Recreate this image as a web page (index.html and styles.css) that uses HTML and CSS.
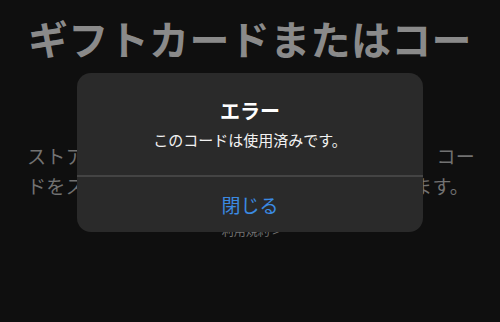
FILE: index.html
```html
<!doctype html>
<html>
  <head>
    <meta charset="utf-8">
    <meta name="viewport" content="width=device-width, initial-scale=1" />
    <title>ギフトカードまたはコード</title>
    <link rel="stylesheet" href="styles.css">
  </head>
  <body>
    <div class='all'>
      <main class='content'>
        <h1 class='title'>ギフトカードまたはコード</h1>
        <p class='lead'>
          ストアで使えるギフトカードまたはチャージ コー<br>ドをスキャンするか、手動で入力して追加します。
        </p>
        <a class='terms' href='#'>利用規約 &gt;</a>
      </main>

      <div class='alert' role='alertdialog'>
        <div class='alert-body'>
          <div class='alert-title'>エラー</div>
          <div class='alert-message'>このコードは使用済みです。</div>
        </div>
        <div class='alert-sep'></div>
        <button class='alert-button'>閉じる</button>
      </div>
    </div>
  </body>
</html>
```

FILE: styles.css
```css
:root {
  --background-color: #0f0f0f;
  --title-color: #8a8a8a;
  --text-color: #727272;
  --alert-color: #2a2a2a;
  --alert-line: #444;
  --link-blue: #3b8ae3;
  --radius: 14px;
}

body {
  margin: 0;
  background: var(--background-color);
  font-family: "Noto Sans CJK JP", "Noto Sans", sans-serif;
}

.all {
  position: relative;
  width: 500px;
  height: 322px;
  overflow: hidden;
}

.content {
  display: flex;
  flex-direction: column;
  padding: 0 27px 0 28px;
}

.title {
  margin: 14px 0 0;
  font-size: 40px;
  line-height: 48px;
  font-weight: 700;
  letter-spacing: 0.36px;
  color: var(--title-color);
  white-space: nowrap;
  overflow: hidden;
}

.lead {
  margin: 79px 0 0 -1px;
  font-size: 19px;
  line-height: 30px;
  letter-spacing: 0.35px;
  word-spacing: 19px;
  color: var(--text-color);
  white-space: nowrap;
}

.terms {
  margin-top: 21px;
  align-self: center;
  font-size: 12px;
  line-height: 18px;
  color: var(--text-color);
  text-decoration: none;
}

.alert {
  position: absolute;
  left: 77px;
  top: 73px;
  width: 346px;
  display: flex;
  flex-direction: column;
  background: var(--alert-color);
  border-radius: var(--radius);
  overflow: hidden;
}

.alert-body {
  display: flex;
  flex-direction: column;
  align-items: center;
  gap: 7px;
  padding: 26px 16px 25px;
}

.alert-title {
  font-size: 20px;
  line-height: 24px;
  font-weight: 700;
  color: #fff;
}

.alert-message {
  font-size: 15px;
  line-height: 20px;
  color: #f2f2f2;
}

.alert-sep {
  height: 2px;
  background: var(--alert-line);
}

.alert-button {
  height: 55px;
  border: 0;
  background: none;
  font-family: inherit;
  font-size: 19px;
  color: var(--link-blue);
  padding: 0;
}
```
